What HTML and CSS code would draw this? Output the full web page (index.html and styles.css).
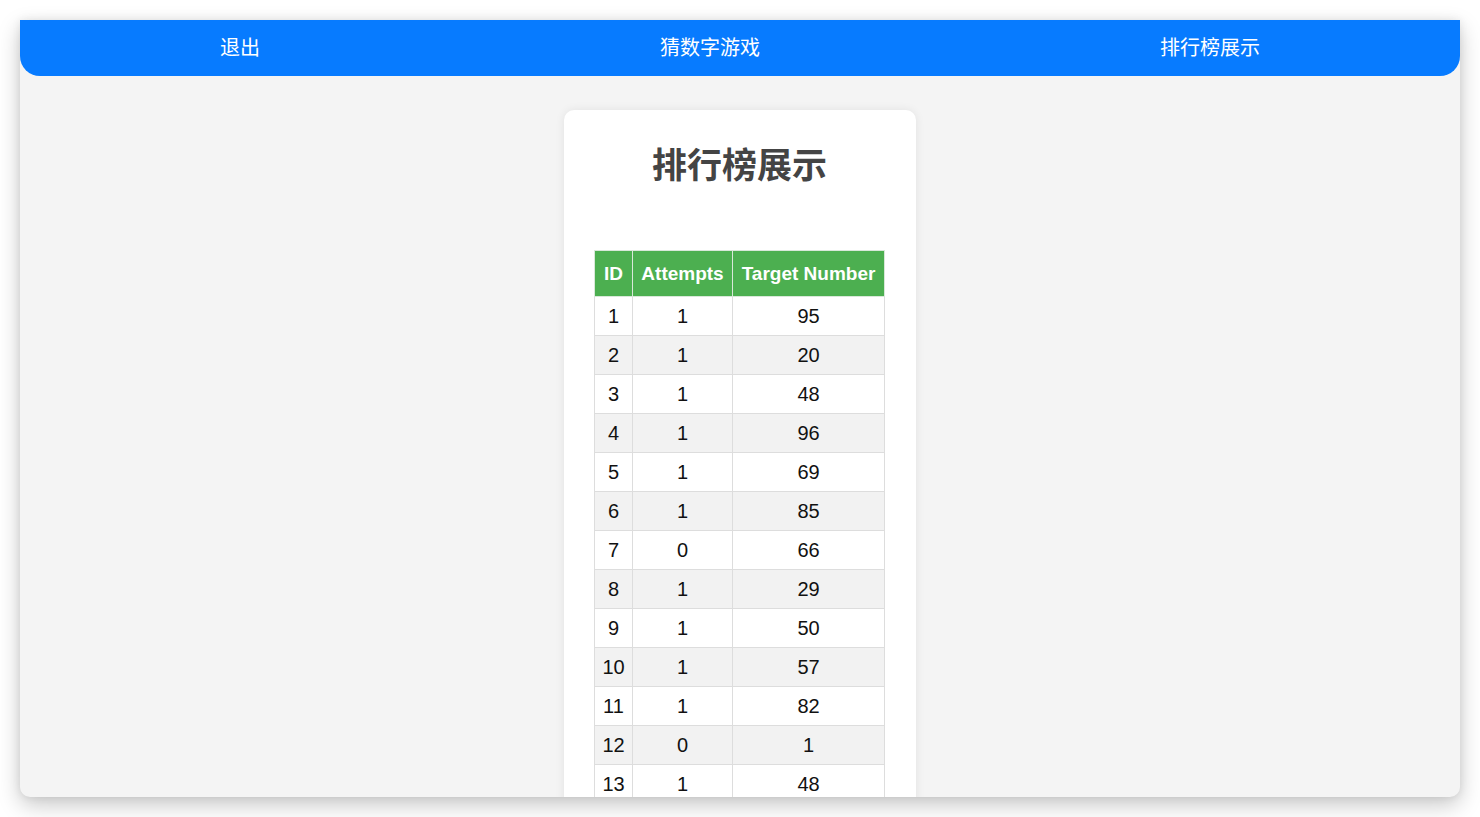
FILE: index.html
```html
<!DOCTYPE html>
<html lang="zh">
<head>
<meta charset="utf-8">
<title>排行榜展示</title>
<link rel="stylesheet" href="styles.css">
</head>
<body>
<div class="window">
  <nav class="navbar">
    <a class="nav-link">退出</a>
    <a class="nav-link">猜数字游戏</a>
    <a class="nav-link">排行榜展示</a>
  </nav>
  <main class="main">
    <section class="card">
      <h1 class="title">排行榜展示</h1>
      <table class="board">
        <colgroup>
          <col class="c-id"><col class="c-att"><col class="c-target">
        </colgroup>
        <thead>
          <tr><th>ID</th><th>Attempts</th><th>Target Number</th></tr>
        </thead>
        <tbody>
          <tr><td>1</td><td>1</td><td>95</td></tr>
          <tr><td>2</td><td>1</td><td>20</td></tr>
          <tr><td>3</td><td>1</td><td>48</td></tr>
          <tr><td>4</td><td>1</td><td>96</td></tr>
          <tr><td>5</td><td>1</td><td>69</td></tr>
          <tr><td>6</td><td>1</td><td>85</td></tr>
          <tr><td>7</td><td>0</td><td>66</td></tr>
          <tr><td>8</td><td>1</td><td>29</td></tr>
          <tr><td>9</td><td>1</td><td>50</td></tr>
          <tr><td>10</td><td>1</td><td>57</td></tr>
          <tr><td>11</td><td>1</td><td>82</td></tr>
          <tr><td>12</td><td>0</td><td>1</td></tr>
          <tr><td>13</td><td>1</td><td>48</td></tr>
        </tbody>
      </table>
    </section>
  </main>
</div>
</body>
</html>
```
FILE: styles.css
```css
html, body {
  margin: 0;
  padding: 0;
  background: #ffffff;
}
body {
  padding: 20px;
  font-family: "Liberation Sans", "Noto Sans CJK SC", Arial, sans-serif;
}
.window {
  width: 1440px;
  height: 777px;
  background: #f4f4f4;
  border-radius: 0 0 10px 10px;
  overflow: hidden;
  box-shadow: 0 8px 22px rgba(0, 0, 0, 0.22), 0 0 8px rgba(0, 0, 0, 0.08);
  display: flex;
  flex-direction: column;
}
.navbar {
  height: 56px;
  box-sizing: border-box;
  padding-bottom: 2px;
  flex: none;
  background: #077bff;
  border-radius: 0 0 20px 20px;
  display: flex;
  justify-content: space-around;
  align-items: center;
}
.nav-link {
  color: #ffffff;
  font-family: "Noto Sans CJK SC", sans-serif;
  font-size: 20px;
  line-height: 26px;
  text-decoration: none;
}
.main {
  flex: 1;
  display: flex;
  justify-content: center;
  align-items: flex-start;
  padding-top: 34px;
}
.card {
  background: #ffffff;
  border-radius: 10px;
  box-shadow: 0 0 10px rgba(0, 0, 0, 0.08);
  padding: 30px 31px 30px 30px;
}
.title {
  margin: 0 0 64px;
  text-align: center;
  font-family: "Noto Sans CJK SC", sans-serif;
  font-weight: 700;
  font-size: 35px;
  line-height: 46px;
  color: #444444;
}
.board {
  border-collapse: collapse;
  margin: 0 auto;
  font-size: 20px;
  color: #111111;
}
.c-id { width: 38px; }
.c-att { width: 100px; }
.c-target { width: 152px; }
.board th,
.board td {
  border: 1px solid #dddddd;
  text-align: center;
  line-height: 20px;
  padding: 9px 4px;
}
.board th {
  background: #4caf50;
  color: #ffffff;
  font-weight: 700;
  font-size: 19px;
  line-height: 21px;
  padding: 12px 4px;
  border-color: #d9e8d9;
}
.board tbody tr:nth-child(even) td {
  background: #f2f2f2;
}
```
